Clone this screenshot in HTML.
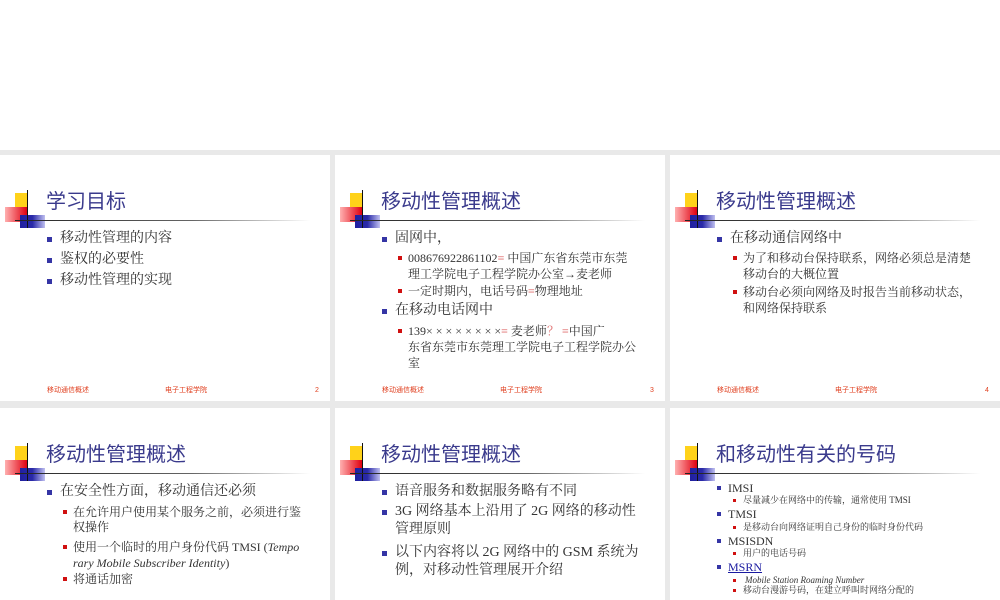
<!DOCTYPE html><html style="width:1000px;height:600px;overflow:hidden"><head><meta charset="utf-8"><style>
body{margin:0;width:1000px;height:600px;background:#fff;position:relative;overflow:hidden;font-family:"Liberation Serif","Noto Serif CJK SC","Noto Sans CJK SC",serif;color:#333}
.bg{position:absolute;left:0;top:150px;width:1000px;height:450px;background:#e9e9e9}
.s{position:absolute;width:330px;height:246px;background:#fff;overflow:hidden}
.s2{height:192px}
.s div,.s span.a{position:absolute;white-space:nowrap}
.y{left:15px;top:38px;width:13px;height:17px;background:#ffd21a}
.r{left:5px;top:52px;width:22px;height:15px;background:linear-gradient(90deg,#ffb0b0,#e00010)}
.b{left:20px;top:60px;width:25px;height:13px;background:linear-gradient(90deg,#2020a0,#2a2aa8 50%,#c0c0f0)}
.v{left:27px;top:35px;width:1px;height:38px;background:#111}
.h{left:15px;top:65px;width:295px;height:1px;background:linear-gradient(90deg,#222,#666 60%,#fff)}
.t{left:46px;top:33px;font-size:20px;line-height:28px;color:#3a3a8c;font-family:"Liberation Sans","Noto Sans CJK SC",sans-serif}
.l1{font-size:14px;line-height:16px;left:60px}
.l2{font-size:12px;line-height:14px;left:73px}
.bb{width:5px;height:5px;background:#3535a5}
.rb{width:4px;height:4px;background:#d01010}
.f{font-size:7px;color:#e04020;top:231px;line-height:10px;font-family:"Liberation Sans","Noto Sans CJK SC",sans-serif}
</style></head><body>
<div class="bg"></div>

<div class="s" style="left:0;top:155px">
<div class="y"></div><div class="r"></div><div class="b"></div><div class="v"></div><div class="h"></div>
<div class="t">学习目标</div>
<div class="bb" style="left:47px;top:82px"></div><div class="l1" style="top:76px">移动性管理的内容</div>
<div class="bb" style="left:47px;top:103px"></div><div class="l1" style="top:97px">鉴权的必要性</div>
<div class="bb" style="left:47px;top:124px"></div><div class="l1" style="top:118px">移动性管理的实现</div>
<div class="f" style="left:47px">移动通信概述</div><div class="f" style="left:165px">电子工程学院</div><div class="f" style="left:315px">2</div>
</div>

<div class="s" style="left:335px;top:155px">
<div class="y"></div><div class="r"></div><div class="b"></div><div class="v"></div><div class="h"></div>
<div class="t">移动性管理概述</div>
<div class="bb" style="left:47px;top:82px"></div><div class="l1" style="top:76px">固网中，</div>
<div class="rb" style="left:63px;top:101px"></div><div class="l2" style="top:96px">008676922861102<span style="color:#e07070">≡</span> 中国广东省东莞市东莞</div>
<div class="l2" style="top:112px">理工学院电子工程学院办公室→麦老师</div>
<div class="rb" style="left:63px;top:134px"></div><div class="l2" style="top:129px">一定时期内，电话号码<span style="color:#e07070">≡</span>物理地址</div>
<div class="bb" style="left:47px;top:154px"></div><div class="l1" style="top:148px">在移动电话网中</div>
<div class="rb" style="left:63px;top:174px"></div><div class="l2" style="top:169px">139× × × × × × × ×<span style="color:#e07070">≡</span> 麦老师<span style="color:#e07070">？ ≡</span>中国广</div>
<div class="l2" style="top:185px">东省东莞市东莞理工学院电子工程学院办公</div>
<div class="l2" style="top:201px">室</div>
<div class="f" style="left:47px">移动通信概述</div><div class="f" style="left:165px">电子工程学院</div><div class="f" style="left:315px">3</div>
</div>

<div class="s" style="left:670px;top:155px">
<div class="y"></div><div class="r"></div><div class="b"></div><div class="v"></div><div class="h"></div>
<div class="t">移动性管理概述</div>
<div class="bb" style="left:47px;top:82px"></div><div class="l1" style="top:76px">在移动通信网络中</div>
<div class="rb" style="left:63px;top:101px"></div><div class="l2" style="top:96px">为了和移动台保持联系，网络必须总是清楚</div>
<div class="l2" style="top:112px">移动台的大概位置</div>
<div class="rb" style="left:63px;top:135px"></div><div class="l2" style="top:130px">移动台必须向网络及时报告当前移动状态，</div>
<div class="l2" style="top:146px">和网络保持联系</div>
<div class="f" style="left:47px">移动通信概述</div><div class="f" style="left:165px">电子工程学院</div><div class="f" style="left:315px">4</div>
</div>

<div class="s s2" style="left:0;top:408px">
<div class="y"></div><div class="r"></div><div class="b"></div><div class="v"></div><div class="h"></div>
<div class="t">移动性管理概述</div>
<div class="bb" style="left:47px;top:82px"></div><div class="l1" style="top:76px">在安全性方面，移动通信还必须</div>
<div class="rb" style="left:63px;top:102px"></div><div class="l2" style="top:97px">在允许用户使用某个服务之前，必须进行鉴</div>
<div class="l2" style="top:112px">权操作</div>
<div class="rb" style="left:63px;top:137px"></div><div class="l2" style="top:132px">使用一个临时的用户身份代码 TMSI (<i>Tempo</i></div>
<div class="l2" style="top:148px"><i>rary Mobile Subscriber Identity</i>)</div>
<div class="rb" style="left:63px;top:169px"></div><div class="l2" style="top:164px">将通话加密</div>
</div>

<div class="s s2" style="left:335px;top:408px">
<div class="y"></div><div class="r"></div><div class="b"></div><div class="v"></div><div class="h"></div>
<div class="t">移动性管理概述</div>
<div class="bb" style="left:47px;top:82px"></div><div class="l1" style="top:76px">语音服务和数据服务略有不同</div>
<div class="bb" style="left:47px;top:102px"></div><div class="l1" style="top:96px">3G 网络基本上沿用了 2G 网络的移动性</div>
<div class="l1" style="top:114px">管理原则</div>
<div class="bb" style="left:47px;top:143px"></div><div class="l1" style="top:137px">以下内容将以 2G 网络中的 GSM 系统为</div>
<div class="l1" style="top:155px">例，对移动性管理展开介绍</div>
</div>

<div class="s s2" style="left:670px;top:408px">
<div class="y"></div><div class="r"></div><div class="b"></div><div class="v"></div><div class="h"></div>
<div class="t">和移动性有关的号码</div>
<div class="bb" style="left:47px;top:78px;width:4px;height:4px"></div><div style="left:58px;top:73px;font-size:12px;line-height:14px">IMSI</div>
<div class="rb" style="left:63px;top:91px;width:3px;height:3px"></div><div style="left:73px;top:87px;font-size:9px;line-height:11px">尽量减少在网络中的传输，通常使用 TMSI</div>
<div class="bb" style="left:47px;top:104px;width:4px;height:4px"></div><div style="left:58px;top:99px;font-size:12px;line-height:14px">TMSI</div>
<div class="rb" style="left:63px;top:118px;width:3px;height:3px"></div><div style="left:73px;top:114px;font-size:9px;line-height:11px">是移动台向网络证明自己身份的临时身份代码</div>
<div class="bb" style="left:47px;top:131px;width:4px;height:4px"></div><div style="left:58px;top:126px;font-size:12px;line-height:14px">MSISDN</div>
<div class="rb" style="left:63px;top:144px;width:3px;height:3px"></div><div style="left:73px;top:140px;font-size:9px;line-height:11px">用户的电话号码</div>
<div class="bb" style="left:47px;top:157px;width:4px;height:4px"></div><div style="left:58px;top:152px;font-size:12px;line-height:14px;color:#1a1aa0;text-decoration:underline">MSRN</div>
<div class="rb" style="left:63px;top:171px;width:3px;height:3px"></div><div style="left:75px;top:167px;font-size:9px;line-height:11px"><i>Mobile Station Roaming Number</i></div>
<div class="rb" style="left:63px;top:181px;width:3px;height:3px"></div><div style="left:73px;top:177px;font-size:9px;line-height:11px">移动台漫游号码，在建立呼叫时网络分配的</div>
</div>
</body></html>
